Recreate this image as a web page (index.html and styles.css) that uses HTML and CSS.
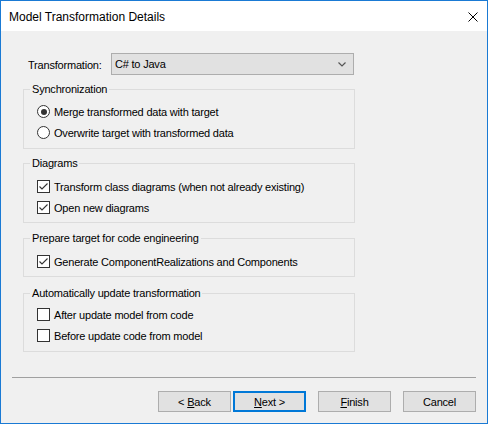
FILE: index.html
```html
<!DOCTYPE html>
<html>
<head>
<meta charset="utf-8">
<link rel="stylesheet" href="styles.css">
</head>
<body>
<div class="window">
  <div class="titlebar">
    <span class="title">Model Transformation Details</span>
    <svg class="close" width="10" height="10" viewBox="0 0 10 10"><path d="M0.5 0.5 L9.5 9.5 M9.5 0.5 L0.5 9.5" stroke="#000" stroke-width="1" fill="none"/></svg>
  </div>
  <div class="body">
    <div class="form">
      <div class="field-row">
        <span class="field-label">Transformation:</span>
        <div class="combo">
          <span class="combo-text">C# to Java</span>
          <svg class="chevron" width="8" height="5" viewBox="0 0 8 5"><path d="M0.5 0.5 L4 4 L7.5 0.5" stroke="#555" stroke-width="1.2" fill="none"/></svg>
        </div>
      </div>

      <fieldset class="group group-sync">
        <legend>Synchronization</legend>
        <div class="opt"><span class="radio radio-on"></span><span>Merge transformed data with target</span></div>
        <div class="opt"><span class="radio"></span><span>Overwrite target with transformed data</span></div>
      </fieldset>

      <fieldset class="group group-diagrams">
        <legend>Diagrams</legend>
        <div class="opt"><span class="check"><svg width="11" height="11" viewBox="0 0 11 11"><path d="M1.5 5.5 L4 8 L9.5 2.5" stroke="#333" stroke-width="1.1" fill="none"/></svg></span><span>Transform class diagrams (when not already existing)</span></div>
        <div class="opt"><span class="check"><svg width="11" height="11" viewBox="0 0 11 11"><path d="M1.5 5.5 L4 8 L9.5 2.5" stroke="#333" stroke-width="1.1" fill="none"/></svg></span><span>Open new diagrams</span></div>
      </fieldset>

      <fieldset class="group group-prepare">
        <legend>Prepare target for code engineering</legend>
        <div class="opt"><span class="check"><svg width="11" height="11" viewBox="0 0 11 11"><path d="M1.5 5.5 L4 8 L9.5 2.5" stroke="#333" stroke-width="1.1" fill="none"/></svg></span><span>Generate ComponentRealizations and Components</span></div>
      </fieldset>

      <fieldset class="group group-auto">
        <legend>Automatically update transformation</legend>
        <div class="opt"><span class="check"></span><span>After update model from code</span></div>
        <div class="opt"><span class="check"></span><span>Before update code from model</span></div>
      </fieldset>
    </div>

    <div class="sep"></div>

    <div class="buttons">
      <div class="btn btn-back"><span>&lt; <u>B</u>ack</span></div>
      <div class="btn btn-next btn-default"><span><u>N</u>ext &gt;</span></div>
      <div class="btn"><span><u>F</u>inish</span></div>
      <div class="btn"><span>Cancel</span></div>
    </div>
  </div>
</div>
</body>
</html>
```

FILE: styles.css
```css
html, body {
  margin: 0;
  padding: 0;
  width: 488px;
  height: 424px;
  overflow: hidden;
}

.window {
  box-sizing: border-box;
  width: 488px;
  height: 424px;
  border: 1px solid #1a7ad4;
  display: flex;
  flex-direction: column;
  font-family: "Liberation Sans", Arial, sans-serif;
  color: #000;
}

.titlebar {
  height: 30px;
  flex: none;
  background: #fff;
  display: flex;
  align-items: center;
  padding: 0 9px 0 8px;
}

.title {
  font-size: 12px;
  flex: 1;
  padding-top: 1px;
}

.close {
  display: block;
  margin-top: 1px;
}

.body {
  flex: 1;
  background: #f0f0f0;
  padding: 0 11px;
  display: flex;
  flex-direction: column;
  font-size: 11px;
  letter-spacing: -0.2px;
}

.form {
  padding-left: 11px;
}

.field-row {
  display: flex;
  align-items: center;
  margin-top: 22px;
  height: 22px;
}

.field-label {
  width: 88px;
  padding-left: 5px;
  box-sizing: border-box;
  padding-top: 1px;
}

.combo {
  box-sizing: border-box;
  width: 243px;
  height: 22px;
  background: #e1e1e1;
  border: 1px solid #adadad;
  display: flex;
  align-items: center;
  padding: 0 7px 0 3px;
}

.combo-text {
  flex: 1;
}

.chevron {
  display: block;
  margin-top: 1px;
}

.group {
  box-sizing: border-box;
  width: 332px;
  margin: 8px 0 0 0;
  padding: 5px 0 5px 13px;
  border: 1px solid #dcdcdc;
  min-inline-size: 0;
}

.group legend {
  padding: 0 2px;
  margin-left: -7px;
  line-height: 13px;
}

.group-diagrams {
  margin-top: 8px;
  padding-top: 6px;
  padding-bottom: 4px;
}

.group-prepare {
  margin-top: 9px;
  padding-top: 6px;
  padding-bottom: 4px;
}

.group-auto {
  margin-top: 10px;
  padding-top: 4px;
  padding-bottom: 5px;
}

.opt {
  display: flex;
  align-items: center;
  height: 21px;
  gap: 4px;
}

.radio {
  box-sizing: border-box;
  width: 13px;
  height: 13px;
  border: 1px solid #333;
  border-radius: 50%;
  background: #fff;
  display: flex;
  align-items: center;
  justify-content: center;
  flex: none;
}

.radio-on::after {
  content: "";
  width: 6px;
  height: 6px;
  border-radius: 50%;
  background: #333;
}

.check {
  box-sizing: border-box;
  width: 13px;
  height: 13px;
  border: 1px solid #333;
  background: #fff;
  flex: none;
  display: flex;
}

.check svg {
  display: block;
}

.sep {
  height: 0;
  border-top: 1px solid #a0a0a0;
  margin-top: 25px;
}

.buttons {
  display: flex;
  justify-content: flex-end;
  margin-top: 13px;
  gap: 12px;
}

.btn {
  box-sizing: border-box;
  width: 73px;
  height: 21px;
  background: #e1e1e1;
  border: 1px solid #adadad;
  display: flex;
  align-items: center;
  justify-content: center;
}

.btn-back {
  margin-right: -10px;
}

.btn-default {
  border: 2px solid #0078d7;
}
```
